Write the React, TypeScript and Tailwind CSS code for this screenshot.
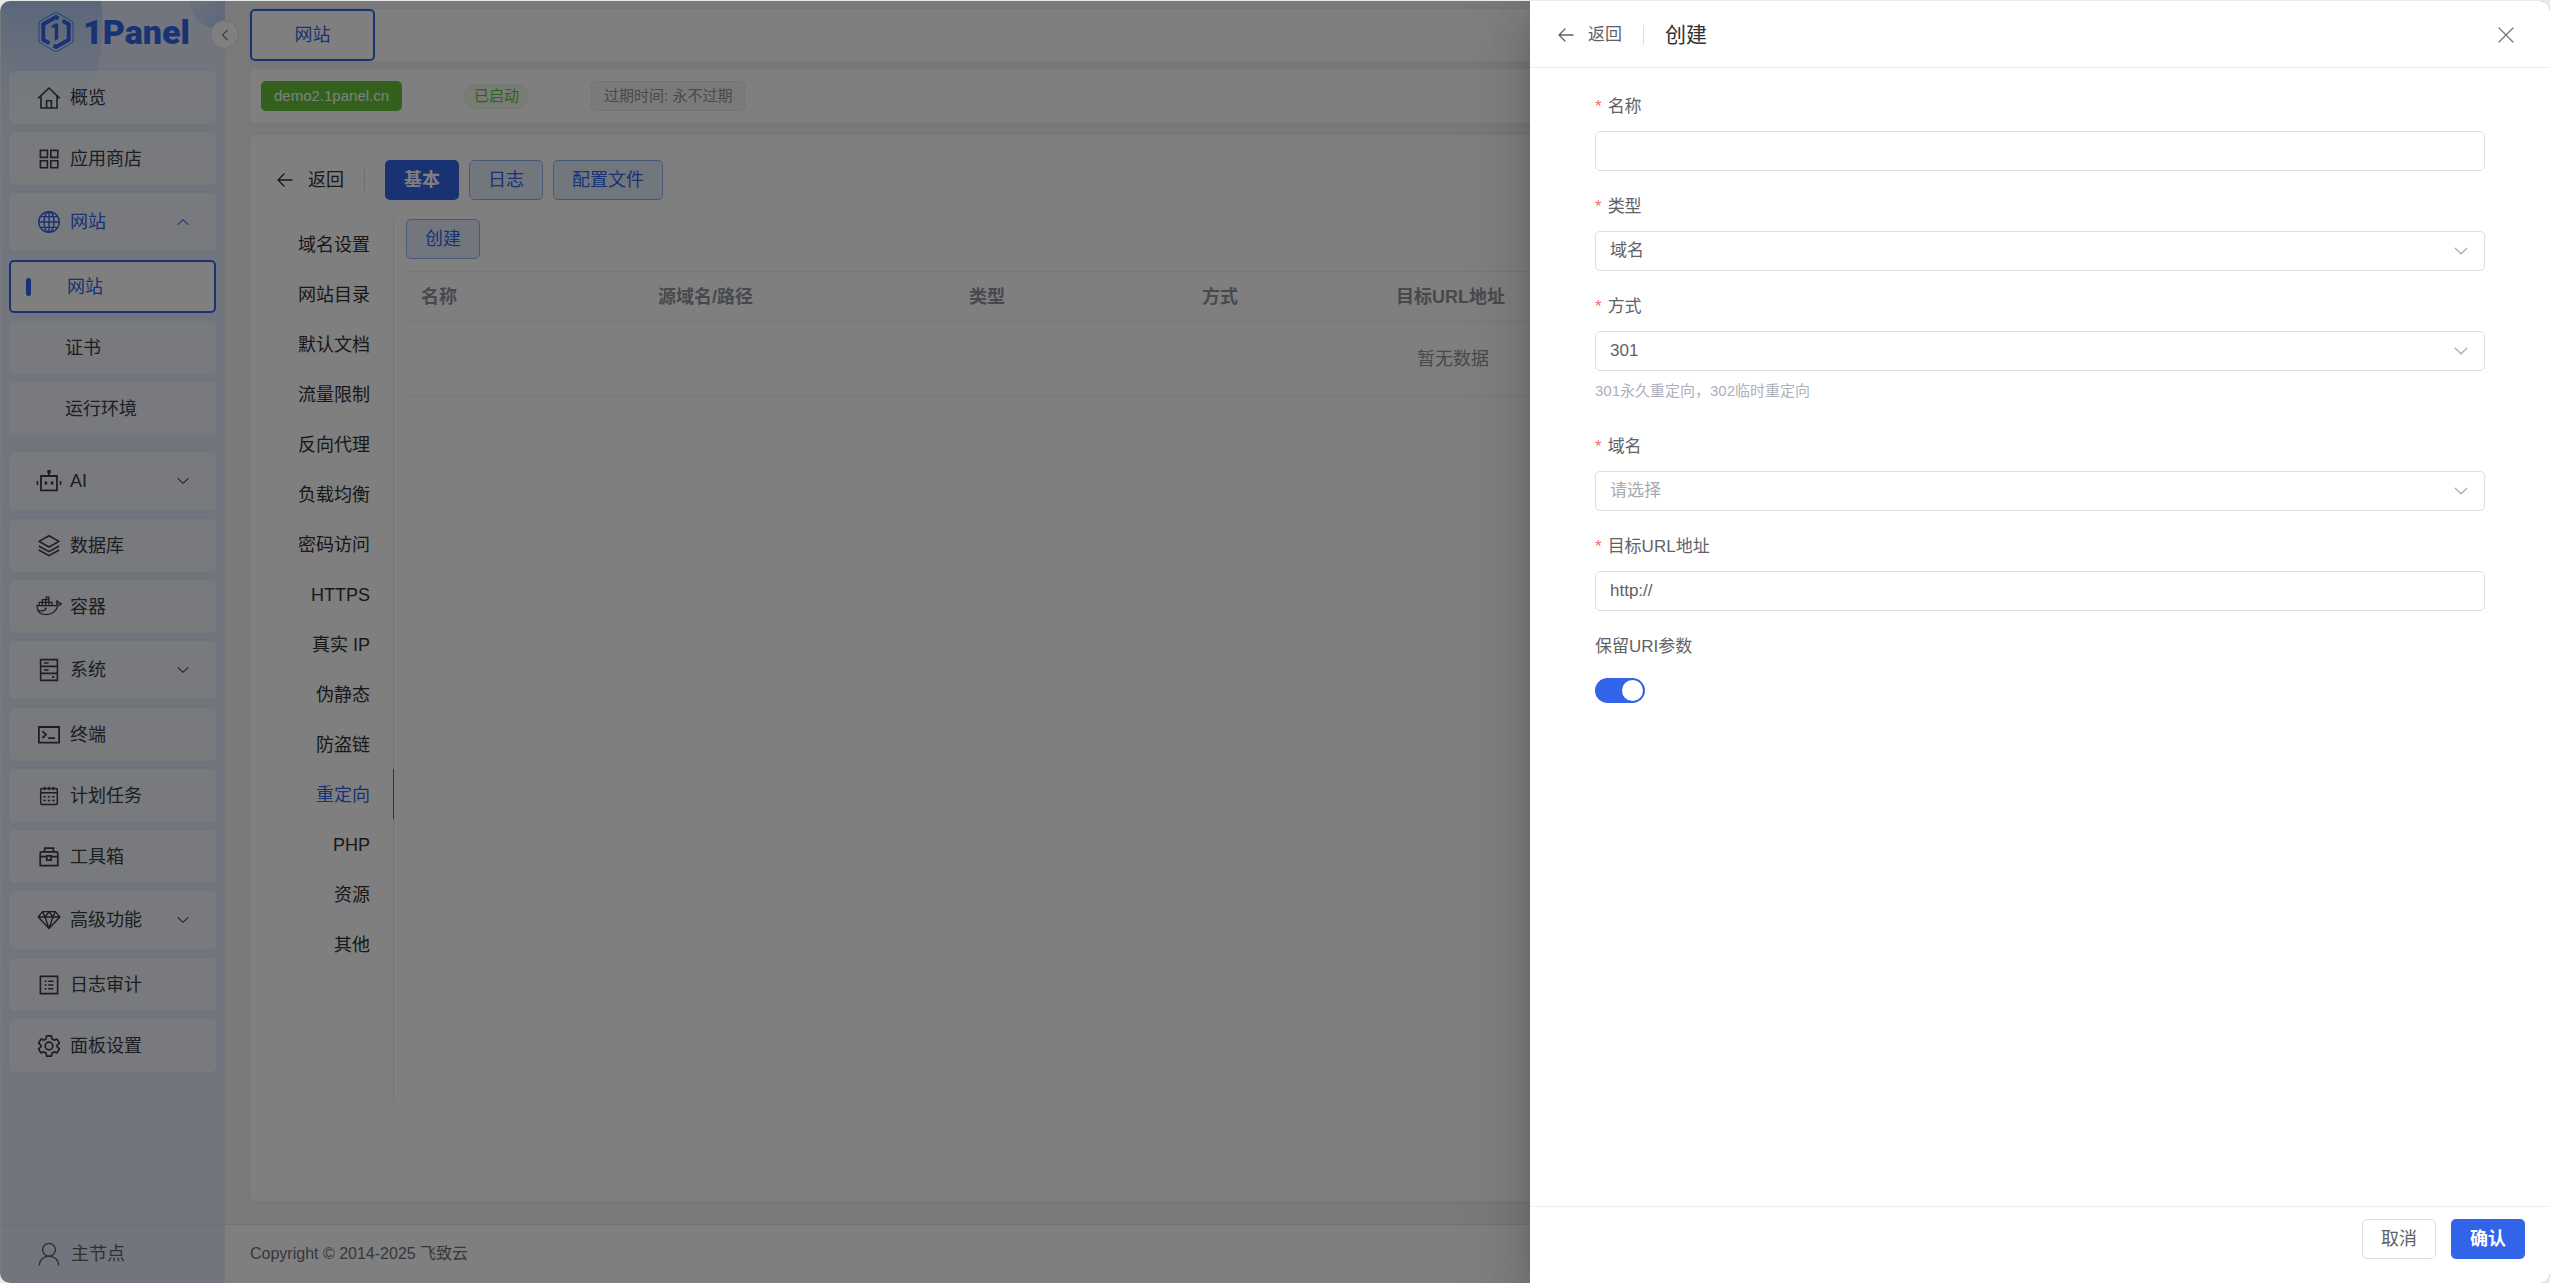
import React, { useState } from 'react';

type IconProps = { className?: string };

// ---------- icons ----------

const Stroke: React.FC<IconProps & { children: React.ReactNode; width?: number }> = ({ className = 'h-6 w-6', children, width = 1.6 }) => (
  <svg viewBox="0 0 24 24" fill="none" stroke="currentColor" strokeWidth={width} className={className} aria-hidden="true">
    {children}
  </svg>
);

const HomeIcon = () => (
  <Stroke>
    <path d="M1.2 12.4 12 2l10.8 10.4M4 10.4V22h16V10.4M9.6 22v-7.2h4.8V22" />
  </Stroke>
);

const AppsIcon = () => (
  <Stroke>
    <path d="M3.4 3.4h7v7h-7zM13.8 3.4h7v7h-7zM3.4 13.8h7v7h-7zM13.8 13.8h7v7h-7z" />
  </Stroke>
);

const GlobeIcon = () => (
  <Stroke width={1.4}>
    <circle cx="12" cy="12" r="10.3" />
    <ellipse cx="12" cy="12" rx="5" ry="10.3" />
    <path d="M12 1.7v20.6M1.7 12h20.6M3.4 6.6h17.2M3.4 17.4h17.2" />
  </Stroke>
);

const RobotIcon = () => (
  <svg viewBox="0 0 26 24" className="h-6 w-[26px]" fill="none" stroke="currentColor" strokeWidth="1.8" aria-hidden="true">
    <path d="M5 7h16v14.4H5zM13 7V3" />
    <path d="M11.3 1h3.4v3.2h-3.4zM8.6 12.4h2.6v3H8.6zM14.8 12.4h2.6v3h-2.6zM.6 12h1.6v4H.6zM23.8 12h1.6v4h-1.6z" fill="currentColor" stroke="none" />
  </svg>
);

const LayersIcon = () => (
  <Stroke>
    <path d="M12 1.8 22 7.4 12 13 2 7.4zM1.8 12 12 17.6 22.2 12M1.8 16 12 21.6 22.2 16" strokeLinejoin="round" />
  </Stroke>
);

const DockerIcon = () => (
  <svg viewBox="0 0 26 24" className="h-6 w-[26px]" fill="none" stroke="currentColor" strokeWidth="1.3" aria-hidden="true">
    <path d="M1 10.6h18.6c1-.2 1.6-.6 1.6-1.6-.8-.8-.8-2.2-.2-3.2 1 .6 1.600 1.400 1.700 2.300 1-.2 2 0 2.600.4-.6 1.300-1.700 1.900-3.200 1.900C20 16.600 15.800 19.600 10 19.600c-6 0-9-3-9-9z" />
    <path d="M3.200 10.400V7.400h12.900v3M6.400 10.400V4.600h6.500v5.800M9.700 10.400V4.600M12.900 7.400V2.200h-2.600v2.400M16.100 7.400h-3" />
    <path d="M2.400 15.400c2.600 1 5 .6 7.200-.6" />
    <circle cx="9.600" cy="13.600" r=".5" fill="currentColor" />
  </svg>
);

const ServerIcon = () => (
  <Stroke>
    <path d="M3.600 1.600h16.800v20.800H3.600zM3.600 8.400h16.800M3.600 15.400h16.800M7 5h4.600M7 12h4.600" />
    <path d="M15.200 18h2v2h-2z" fill="currentColor" stroke="none" />
  </Stroke>
);

const TerminalIcon = () => (
  <Stroke width={1.8}>
    <path d="M1.900 4h20.200v15.600H1.900zM5.400 8.200l3.600 3.400-3.600 3.400M11.200 15.200H18" />
  </Stroke>
);

const CalendarIcon = () => (
  <Stroke width={1.5}>
    <rect x="3.700" y="4.600" width="16.600" height="15.800" rx="1.200" />
    <path d="M7.600 2.800v3.400M12 2.800v3.400M16.400 2.800v3.400M3.700 8.800h16.600" />
    <path d="M6.400 12.800h2.400M10.800 12.800h2.400M15.200 12.800h2.400M6.400 16.600h2.400M10.800 16.600h2.400M15.200 16.600h2.400" />
  </Stroke>
);

const ToolboxIcon = () => (
  <Stroke width={1.7}>
    <path d="M3.200 20.600V8.400q0-1.600 1.600-1.600h14.400q1.600 0 1.600 1.600v12.200zM7.600 6.600V3.200h8.800v3.400M3.200 11.600h6.600M14.200 11.600h6.600M9.800 10.800h4.400v4.400H9.800z" />
  </Stroke>
);

const GemIcon = () => (
  <Stroke width={1.4}>
    <path d="M5.600 3.600h12.800L22.800 9 12 20.600 1.200 9zM1.200 9h21.600M5.600 3.600 8 9l4-5.400L16 9l2.400-5.400M8 9l4 11.600L16 9" strokeLinejoin="round" />
  </Stroke>
);

const AuditIcon = () => (
  <Stroke>
    <path d="M3.400 3.400h17.200v17.200H3.400z" />
    <path d="M7.600 8.200h2M7.600 12h2M7.600 15.800h2M11.200 8.200h5.200M11.200 12h5.200M11.200 15.800h5.200" strokeWidth="1.500" />
  </Stroke>
);

const GearIcon = () => (
  <Stroke width={1.7}>
    <path
      d="M9.700 1.800h4.600l.7 3.100 2 1.200 3.100-1 2.300 4-2.400 2.200v1.400l2.400 2.200-2.300 4-3.100-1-2 1.200-.7 3.100H9.700L9 19.100l-2-1.200-3.100 1-2.300-4L4 12.700v-1.400L1.600 9.100l2.300-4 3.100 1 2-1.200z"
      strokeLinejoin="round"
    />
    <circle cx="12" cy="12" r="3.800" />
  </Stroke>
);

const UserIcon = () => (
  <Stroke width={1.4}>
    <circle cx="12" cy="7.800" r="6.400" />
    <path d="M2.400 23.400c0-5.600 4-9.200 9.600-9.200s9.600 3.600 9.600 9.200" />
  </Stroke>
);

const ChevronIcon: React.FC<IconProps> = ({ className }) => (
  <svg viewBox="0 0 14 14" fill="none" stroke="currentColor" strokeWidth="1.200" strokeLinecap="round" className={className} aria-hidden="true">
    <path d="m1.200 4.200 5.800 5.600 5.800-5.600" />
  </svg>
);

const BackArrow = () => (
  <svg viewBox="0 0 16 16" fill="none" stroke="currentColor" strokeWidth="1.300" strokeLinecap="round" className="h-4 w-4" aria-hidden="true">
    <path d="M15 8H1.200M7 2 1 8l6 6" />
  </svg>
);

const Logo = () => (
  <div className="flex items-center gap-[9px] pl-[37px] text-[#3164e8]">
    <svg viewBox="0 0 36 42" className="h-[42px] w-9 shrink-0" fill="none" stroke="currentColor" aria-hidden="true">
      <path d="M18 1 35 10.800v20.400L18 41 1 31.200V10.800z" strokeWidth=".8" />
      <path d="M20.500 7.400 18 6 5.300 13.200v15.600l6.200 3.500" strokeWidth="4" />
      <path d="M15.500 34.600 18 36l12.700-7.200V13.200l-6.200-3.500" strokeWidth="4" />
      <path d="M13.400 15 17 12.400h3.200v15.400l-3.400 2.200V16.600h-3.400z" fill="currentColor" stroke="none" />
    </svg>
    <span className="font-[Roboto] text-[34px] leading-[42px] font-black">1Panel</span>
  </div>
);

// ---------- sidebar ----------

const topMenu = [
  { label: '概览', icon: <HomeIcon /> },
  { label: '应用商店', icon: <AppsIcon /> },
];

const bottomMenu = [
  { label: 'AI', icon: <RobotIcon />, group: true },
  { label: '数据库', icon: <LayersIcon /> },
  { label: '容器', icon: <DockerIcon /> },
  { label: '系统', icon: <ServerIcon />, group: true },
  { label: '终端', icon: <TerminalIcon /> },
  { label: '计划任务', icon: <CalendarIcon /> },
  { label: '工具箱', icon: <ToolboxIcon /> },
  { label: '高级功能', icon: <GemIcon />, group: true },
  { label: '日志审计', icon: <AuditIcon /> },
  { label: '面板设置', icon: <GearIcon /> },
];

interface MenuItemProps {
  label: string;
  icon: React.ReactNode;
  group?: boolean;
  open?: boolean;
}

const MenuItem: React.FC<MenuItemProps> = ({ label, icon, group, open }) => {
  const color = open ? 'text-[#3164e8]' : 'text-[#393c44]';
  const cls = `flex w-full items-center rounded-[5px] bg-white/50 px-[27px] text-lg shadow-[0_0_5px_rgba(0,94,235,0.06)] ${color}`;
  const content = (
    <>
      <span className="flex w-[26px] shrink-0 justify-center">{icon}</span>
      <span className="ml-2 flex-1 text-left">{label}</span>
    </>
  );

  if (group) {
    return (
      <button type="button" aria-expanded={!!open} className={`${cls} mb-px h-[58px]`}>
        {content}
        <ChevronIcon className={`h-3 w-3 ${open ? 'rotate-180' : ''}`} />
      </button>
    );
  }
  return (
    <a href="#" className={`${cls} h-[53px]`}>
      {content}
    </a>
  );
};

const Sidebar = () => (
  <aside className="relative flex w-[225px] shrink-0 flex-col border-l border-[#f2f5fb] bg-[#e4ebfb]">
    <svg viewBox="0 0 224 200" className="absolute top-0 left-0 h-[200px] w-[224px]" aria-hidden="true">
      <defs>
        <linearGradient id="glow" x1="0" y1="0" x2="0" y2="1">
          <stop offset="0.400" stopColor="#aecbf7" />
          <stop offset="0.900" stopColor="#e4ebfb" stopOpacity="0" />
        </linearGradient>
        <linearGradient id="dot" x1="0" y1="0" x2="1" y2="1">
          <stop offset="0.200" stopColor="#e0e8fb" />
          <stop offset="0.800" stopColor="#b4cdf5" />
        </linearGradient>
      </defs>
      <circle cx="-55" cy="25" r="157" fill="url(#glow)" />
      <circle cx="220" cy="-3" r="32" fill="url(#dot)" />
    </svg>
    <div className="relative pt-[10px] pb-[18px]">
      <Logo />
      <button
        type="button"
        aria-label="收起菜单"
        className="absolute top-[19px] -right-[14px] z-10 flex h-[29px] w-[29px] items-center justify-center rounded-full border border-[#dcdfe6] bg-white text-[#606266]"
      >
        <ChevronIcon className="h-3 w-3 rotate-90" />
      </button>
    </div>
    <nav className="relative flex flex-1 flex-col gap-2 pr-[9px] pl-2 text-lg">
      {topMenu.map(item => (
        <MenuItem key={item.label} {...item} />
      ))}
      <MenuItem label="网站" icon={<GlobeIcon />} group open />
      <div className="mb-[9px] flex flex-col gap-2">
        <a href="#" aria-current="page" className="flex h-[53px] items-center rounded-[5px] border-2 border-[#3164e8] bg-white pl-[15px] text-[#3164e8]">
          <span className="mr-9 h-[18px] w-[5px] rounded-full bg-[#3164e8]" />
          网站
        </a>
        {['证书', '运行环境'].map(label => (
          <a key={label} href="#" className="flex h-[53px] items-center rounded-[5px] bg-white/50 pt-px pl-14 text-[#393c44]">
            {label}
          </a>
        ))}
      </div>
      {bottomMenu.map(item => (
        <MenuItem key={item.label} {...item} />
      ))}
    </nav>
    <button type="button" className="relative flex h-[59px] items-center border-t border-[#e0e0e0] pl-9 text-lg text-[#606266]">
      <UserIcon />
      <span className="ml-[10px]">主节点</span>
    </button>
  </aside>
);

// ---------- main page ----------

const siteTabs = [
  '域名设置', '网站目录', '默认文档', '流量限制', '反向代理', '负载均衡', '密码访问', 'HTTPS',
  '真实 IP', '伪静态', '防盗链', '重定向', 'PHP', '资源', '其他',
];

const card = 'rounded-[5px] bg-white shadow-[0_0_6px_rgba(0,94,235,0.08)]';
const plainButton = 'h-10 rounded-[5px] border border-[#8fb3f2] bg-[#e5eefc] px-[18px] text-lg leading-9 text-[#3164e8]';

const WebsitePage = () => (
  <main className="flex min-w-0 flex-1 flex-col bg-[#f4f4f4]">
    <div className="flex flex-1 flex-col px-[25px] pt-2 pb-[23px]">
      <div className={`${card} mb-2 flex`}>
        <button type="button" className="h-[52px] w-[125px] rounded-[5px] border-2 border-[#3164e8] bg-white text-lg text-[#3164e8]">
          网站
        </button>
      </div>

      <div className={`${card} mb-3 flex h-[54px] items-center gap-[62px] px-[11px] text-[15px]`}>
        <span className="flex h-[30px] items-center rounded-[5px] bg-[#67c23a] px-[13px] text-white">demo2.1panel.cn</span>
        <span className="flex h-[25px] items-center rounded-full border border-[#e1f3d8] bg-[#f0f9eb] px-[9px] text-[#67c23a]">已启动</span>
        <span className="flex h-[30px] items-center rounded-[5px] border border-[#e9e9eb] bg-[#f4f4f5] px-3 text-[#909399]">过期时间: 永不过期</span>
      </div>

      <div className={`${card} flex-1 p-[25px]`}>
        <div className="flex items-center">
          <button type="button" className="ml-[2px] flex items-center gap-[15px] text-lg text-[#303133]">
            <BackArrow />
            返回
          </button>
          <span className="mx-5 h-5 w-px bg-[#dcdfe6]" />
          <div className="flex gap-[10px]">
            <button type="button" className="h-10 rounded-[5px] bg-[#3164e8] px-[19px] text-lg leading-9 font-bold text-white">基本</button>
            <button type="button" className={plainButton}>日志</button>
            <button type="button" className={plainButton}>配置文件</button>
          </div>
        </div>

        <div className="mt-[19px] flex">
          <div role="tablist" aria-orientation="vertical" className="flex h-[882px] w-[119px] flex-col border-r border-[#e4e7ed]">
            {siteTabs.map(tab => {
              const active = tab === '重定向';
              return (
                <button
                  key={tab}
                  type="button"
                  role="tab"
                  aria-selected={active}
                  className={`-mr-px h-[50px] border-r pt-px pr-[23px] text-right text-lg ${active ? 'border-[#3164e8] text-[#3164e8]' : 'border-transparent text-[#303133]'}`}
                >
                  {tab}
                </button>
              );
            })}
          </div>

          <div className="ml-3 min-w-0 flex-1">
            <button type="button" className={plainButton}>创建</button>
            <table className="mt-3 w-full table-fixed border-t border-[#ebeef5] text-left text-lg text-[#909399]">
              <thead>
                <tr className="h-[50px] border-b border-[#ebeef5]">
                  <th className="w-[237px] px-[15px]">名称</th>
                  <th className="w-[311px] px-[15px]">源域名/路径</th>
                  <th className="w-[233px] px-[15px]">类型</th>
                  <th className="w-[194px] px-[15px]">方式</th>
                  <th className="px-[15px]">目标URL地址</th>
                </tr>
              </thead>
              <tbody>
                <tr className="h-[75px] border-b border-[#ebeef5]">
                  <td colSpan={5} className="text-center">暂无数据</td>
                </tr>
              </tbody>
            </table>
          </div>
        </div>
      </div>
    </div>
    <footer className="flex h-[59px] items-center border-t border-[#e0e3e9] bg-white px-[25px] text-base text-[#6d7077]">
      Copyright © 2014-2025 飞致云
    </footer>
  </main>
);

// ---------- create drawer ----------

const inputClass = 'h-10 w-full rounded-[5px] border border-[#dcdfe6] bg-white px-[14px] text-[17px] outline-none';

interface FieldProps {
  id: string;
  label: string;
  required?: boolean;
  hint?: string;
  children: React.ReactNode;
}

const Field: React.FC<FieldProps> = ({ id, label, required = true, hint, children }) => (
  <div className="mb-[22px]">
    <label htmlFor={id} className="mb-[10px] flex h-7 items-center text-[17px] text-[#606266]">
      {required && <span className="mr-[6px] text-[#f56c6c]">*</span>}
      {label}
    </label>
    {children}
    {hint && <p className="h-10 text-[15px] leading-10 text-[#adb0bc]">{hint}</p>}
  </div>
);

interface SelectBoxProps {
  id: string;
  options: string[];
  placeholder?: string;
}

const SelectBox: React.FC<SelectBoxProps> = ({ id, options, placeholder }) => {
  const [value, setValue] = useState(placeholder ? '' : options[0]);
  return (
    <div className="relative">
      <select
        id={id}
        value={value}
        onChange={e => setValue(e.target.value)}
        className={`${inputClass} appearance-none ${value ? 'text-[#606266]' : 'text-[#a8abb2]'}`}
      >
        {placeholder && <option value="" disabled>{placeholder}</option>}
        {options.map(o => (
          <option key={o} value={o}>{o}</option>
        ))}
      </select>
      <ChevronIcon className="pointer-events-none absolute top-[13px] right-[17px] h-[14px] w-[14px] text-[#a8abb2]" />
    </div>
  );
};

const CreateDrawer = () => {
  const [name, setName] = useState('');
  const [target, setTarget] = useState('http://');
  const [keepPath, setKeepPath] = useState(true);

  return (
    <section
      role="dialog"
      aria-label="创建"
      className="flex w-2/5 flex-col bg-white shadow-[0_20px_60px_20px_rgba(0,0,0,0.08),0_15px_40px_rgba(0,0,0,0.12),0_10px_20px_-10px_rgba(0,0,0,0.16)]"
    >
      <header className="flex h-[67px] items-center border-b border-[#ebeef5] px-7 pt-px">
        <button type="button" className="flex items-center gap-[14px] text-[17px] text-[#606266]">
          <BackArrow />
          返回
        </button>
        <span className="mx-[21px] h-5 w-px bg-[#dcdfe6]" />
        <h2 className="flex-1 text-[21px] text-[#303133]">创建</h2>
        <button type="button" aria-label="关闭" className="mr-2 text-[#72767b]">
          <svg viewBox="0 0 16 16" fill="none" stroke="currentColor" strokeWidth="1.300" strokeLinecap="round" className="h-4 w-4" aria-hidden="true">
            <path d="m1 1 14 14M15 1 1 15" />
          </svg>
        </button>
      </header>

      <form id="redirect-form" className="flex-1 px-[65px] pt-[25px]">
        <Field id="name" label="名称">
          <input id="name" type="text" value={name} onChange={e => setName(e.target.value)} className={`${inputClass} text-[#606266]`} />
        </Field>
        <Field id="type" label="类型">
          <SelectBox id="type" options={['域名', '路径']} />
        </Field>
        <Field id="redirect" label="方式" hint="301永久重定向，302临时重定向">
          <SelectBox id="redirect" options={['301', '302']} />
        </Field>
        <Field id="domains" label="域名">
          <SelectBox id="domains" options={['demo2.1panel.cn']} placeholder="请选择" />
        </Field>
        <Field id="target" label="目标URL地址">
          <input id="target" type="text" value={target} onChange={e => setTarget(e.target.value)} className={`${inputClass} text-[#606266]`} />
        </Field>
        <Field id="keep-path" label="保留URI参数" required={false}>
          <div className="flex h-[38px] items-center">
            <input
              id="keep-path"
              type="checkbox"
              role="switch"
              checked={keepPath}
              onChange={e => setKeepPath(e.target.checked)}
              className="flex h-[25px] w-[50px] appearance-none items-center rounded-full bg-[#dcdfe6] px-[2px] before:h-[21px] before:w-[21px] before:rounded-full before:bg-white checked:justify-end checked:bg-[#3164e8]"
            />
          </div>
        </Field>
      </form>

      <footer className="flex justify-end gap-[15px] border-t border-[#ebeef5] px-[25px] pt-3 pb-6">
        <button type="button" className="h-10 rounded-[5px] border border-[#dcdfe6] bg-white px-[18px] text-lg leading-9 text-[#606266]">取消</button>
        <button type="submit" form="redirect-form" className="h-10 rounded-[5px] bg-[#3164e8] px-[19px] text-lg leading-9 font-bold text-white">确认</button>
      </footer>
    </section>
  );
};

export default function App() {
  return (
    <div className="h-screen bg-[#e9ebea] pt-px font-['Liberation_Sans','Noto_Sans_CJK_SC',sans-serif]">
      <div className="relative flex h-full overflow-hidden rounded-[10px]">
        <Sidebar />
        <WebsitePage />
        <div className="absolute inset-0 z-20 flex justify-end bg-black/50">
          <CreateDrawer />
        </div>
      </div>
    </div>
  );
}
